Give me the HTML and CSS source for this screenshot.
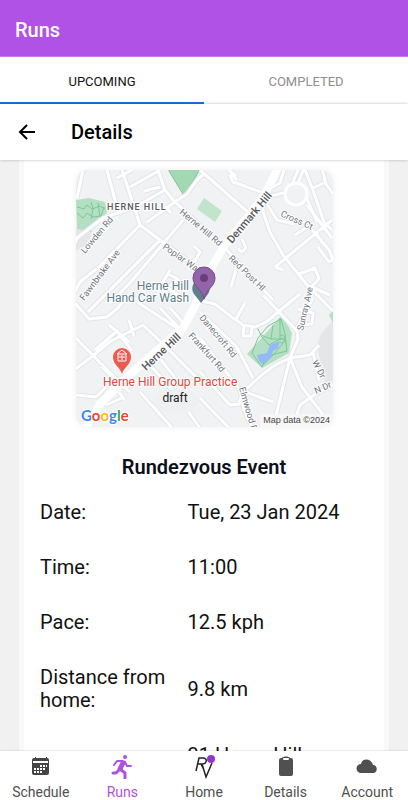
FILE: index.html
```html
<!DOCTYPE html>
<html lang="en">
  <head>
    <meta charset="UTF-8" />
    <meta name="viewport" content="width=device-width, initial-scale=1" />
    <title>Runs</title>
    <link rel="stylesheet" href="styles.css" />
  </head>
  <body>
    <header class="app-header">
      <h1>Runs</h1>
    </header>
    <div class="tabs" role="tablist">
      <button class="tab active" role="tab" aria-selected="true">UPCOMING</button>
      <button class="tab" role="tab" aria-selected="false">COMPLETED</button>
    </div>
    <div class="sub-header">
      <button class="back" aria-label="Back">
        <svg viewBox="0 0 24 24" width="24" height="24">
          <path d="M20 12H5M12 5l-7 7 7 7" fill="none" stroke="#000" stroke-width="2" />
        </svg>
      </button>
      <h2>Details</h2>
    </div>

    <main class="content">
      <div class="card">
        <svg class="map" viewBox="0 0 257 257" role="img" aria-label="Map of Herne Hill">
          <rect width="257" height="257" fill="#f1f2f4" />
          <!-- built-up areas -->
          <path d="M0 58h16l-2 14-14 9zM257 150l-12 14-4 11 8 40 8-5z" fill="#e4e6e8" />
          <!-- parks -->
          <g fill="#b4dfc2">
            <path d="M0 30l13-2 16 4 2 10-4 6-8 4-4 10-14-3z" />
            <path d="M92 0h32l-16 25z" fill="#a3d9b2" />
            <path d="M128 28l18 13-7 11-18-13z" fill="#c0e5ca" />
            <path d="M206 145l10 18-3 20-27 15-15-14z" />
            <path d="M257 141l-4 4 4 8z" />
          </g>
          <g class="park-path">
            <path d="M1 37l7 2 3-4 5 4 8-3 5 3M1 43l6 5 4-5 6 4 8-1 3-9M15 32l2 7-2 10M22 33l2 14" />
            <path d="M93 1l15 25 15-25" />
            <path d="M205 149l4 15 2 17-20 5-5 11-10-14 6-15 10-12zM181 157l4 8 10 4h15M197 155l-2 14M204 148v22M185 166l8 9 13-7 4 5M208 172l-10 12-12 12M204 166a3 4 0 1 1 0 6" />
          </g>
          <path d="M181 185l10-2 3-8 10-4-2 7-5 3-2 7-9 6-3-3z" fill="#93b9fa" />

          <!-- side streets, a grey casing under a white line -->
          <g class="road">
            <path id="streets" d="M7 0L1 28M31 0l8 30 4 14M46 0l18 55M54 17L84 0M41 8L56 0M82 0l7 20-30 17-32 11L1 68l-3 8M89 20l10 12 25 23 25 23 48 52M99 32l12-8 10-14 8-7M71 52l28-20M64 55L24 96 4 112l-6 12M64 55l20 15 38 28M84 70L24 130l-12 12M107 50L54 113l-20 20M118 76l6 6-5 9-7 1M92 104l10 5-8 7M94 100l-8 14 20 14M68 21L84 17M89 36l6 7
            M124 0l50 44M154 5l3 7 28 10M160 6l-7-6 8 10M187 28l0 14 7 20 13 23 24 30 23 10M199 97l57-47M187 28l24-6M231 35l25 33M216 14l7-16M222 13l6-15M191 20l13-7 4-13M191 34l10 16 17 4M231 29l10 23M229 0l8 20 11 32 8 8M246-2l4 16 7 10M237 18l13-6M219 65l14-9 22 26M242 77l11 15 4-2-4-10-9-10M166 69l4 9-4 4-4-3M161 96l-6 21M207 100l-8-3M223 104l16-6 4 11-9 9M231 115l26 26
            M-2 132l15 17 18-2 11-9 11-14M0 168l46 47 8 7M-2 200l16-12 21-17 32-16 20 19 42 42M19 180l22-19 15 20M53 150l5 16M61 132l40 26M33 155l20 17M26 197l15 14 12-2M0 225l20 2 10-10M30 235l16-7M43 222l6 8M74 195l28 32 24 34M64 222l34 38M81 185l24 30M84 138l20 21M94 138l16 18
            M121 130l18 4 18 14 10 7 12 2 11-5 34-28M169 133l-9 16M168 156l-1 10h8l1-9M124 142l36 34 17 32M124 168l40 52 33 12M164 220l4 20 9 20M124 202l30 33 9-1 4-12 20-18 14-10 13-6 20-3 9-10M187 125l34 36 1 8-8 19M214 188l-17 70M214 188l12 29 32 42M124 228l33 34M224 155l12-1 1-11-15-4M237 182l6 28M216 260l8-25 17-12 18-9M221 158l16-30" />
          </g>
          <g class="road-top">
            <use href="#streets" />
            <circle cx="220" cy="24" r="11" />
          </g>
          <path class="main-road" d="M203-4l-16 32-40 50-16 27-10 27-14 26-46 40-37 36-16 26" />

          <g class="street-name">
            <text transform="translate(9 84) rotate(-50)">Lowden Rd</text>
            <text transform="translate(8 131) rotate(-53)">Fawnbrake Ave</text>
            <text transform="translate(103 43) rotate(40)">Herne Hill Rd</text>
            <text transform="translate(86 78) rotate(35)">Poplar Walk</text>
            <text transform="translate(204 46) rotate(24)">Cross Ct</text>
            <text transform="translate(152 89) rotate(44)">Red Post Hl</text>
            <text transform="translate(227 161) rotate(-77)">Sunray Ave</text>
            <text transform="translate(123 148) rotate(50)">Danecroft Rd</text>
            <text transform="translate(112 166) rotate(48)">Frankfurt Rd</text>
            <text transform="translate(163 218) rotate(74)">Elmwood R</text>
            <text transform="translate(236 192) rotate(63)">W Dr</text>
            <text transform="translate(240 224) rotate(-24)">N Dr</text>
          </g>
          <g class="main-name">
            <text transform="translate(156 74) rotate(-50)">Denmark Hill</text>
            <text transform="translate(70 201) rotate(-43)">Herne Hill</text>
          </g>
          <text class="district" x="31" y="40">HERNE HILL</text>

          <path d="M125 133l-7-9c-4-6-1-14 7-14s11 8 7 14z" fill="#607d8b" />
          <text class="shop" x="113" y="120">Herne Hill</text>
          <text class="shop" x="113" y="132">Hand Car Wash</text>
          <path d="M128 129c-1-9-11-12-11-21a11 11 0 0 1 22 0c0 9-10 12-11 21z" fill="#9364a9" stroke="#754a8c" />
          <circle cx="128" cy="108" r="4" fill="#673f7d" />

          <path d="M46 204c-1-6-9-9-9-17a9 9 0 0 1 18 0c0 8-8 11-9 17z" fill="#eb5b50" />
          <path d="M42 184h8v7h-8zM41 184l5-4 5 4M46 185v5M43 187h6" fill="none" stroke="#fff" />
          <rect x="78" y="220" width="44" height="22" rx="11" fill="#eff0f0" />
          <text class="clinic" x="27" y="216">Herne Hill Group Practice</text>
          <text class="draft" x="99" y="232">draft</text>

          <text class="logo" x="5" y="251"><tspan fill="#4285f4">G</tspan><tspan fill="#ea4335">o</tspan><tspan fill="#fbbc05">o</tspan><tspan fill="#4285f4">g</tspan><tspan fill="#34a853">l</tspan><tspan fill="#ea4335">e</tspan></text>
          <rect x="184" y="244" width="73" height="13" fill="#f7f7f8" />
          <text class="credit" x="254" y="253">Map data ©2024</text>
        </svg>

        <h3>Rundezvous Event</h3>
        <table class="details">
          <tbody>
            <tr>
              <th scope="row">Date:</th>
              <td>Tue, 23 Jan 2024</td>
            </tr>
            <tr>
              <th scope="row">Time:</th>
              <td>11:00</td>
            </tr>
            <tr>
              <th scope="row">Pace:</th>
              <td>12.5 kph</td>
            </tr>
            <tr>
              <th scope="row">Distance from home:</th>
              <td>9.8 km</td>
            </tr>
            <tr>
              <td></td>
              <td>31 Herne Hill</td>
            </tr>
          </tbody>
        </table>
      </div>
    </main>

    <nav class="bottom-nav">
      <a href="#schedule">
        <svg viewBox="0 0 24 24" width="24" height="24">
          <path d="M6 2h1v1h10V2h1v1a2 2 0 0 1 2 2v13a2 2 0 0 1-2 2H5a2 2 0 0 1-2-2V5a2 2 0 0 1 2-2h1z" fill="#444" />
          <path d="M4 6h15v2H4z" fill="#fff" />
          <path d="M11 11h2M14 11h2M8 14h2M11 14h2M14 14h2M5 14h2M5 17h2M8 17h2M11 17h2M17 11h1" stroke="#fff" stroke-width="2" />
        </svg>
        Schedule
      </a>
      <a href="#runs" class="current">
        <svg viewBox="0 0 24 24" width="24" height="24" fill="none" stroke="#af52de" stroke-linecap="round" stroke-linejoin="round">
          <circle cx="15" cy="2" r="2" fill="#af52de" stroke="none" />
          <path d="M4 10l3-4 5 0 3 1 2 4h4" stroke-width="2" />
          <path d="M13 8l-3 6" stroke-width="5" />
          <path d="M10 14l5 4v5M8 16l-2 2H3" stroke-width="3" />
        </svg>
        Runs
      </a>
      <a href="#home">
        <svg viewBox="0 0 24 24" width="24" height="24">
          <g fill="none" stroke="#222" stroke-width="1.5">
            <path d="M4 16L7 3h4c5 0 4 6-1 6H6M9 9l3 6M10 9l4 13 6-14" />
          </g>
          <circle cx="19" cy="4" r="4" fill="#9038c8" />
        </svg>
        Home
      </a>
      <a href="#details">
        <svg viewBox="0 0 24 24" width="24" height="24">
          <path d="M7 3h1c1-2 7-2 8 0h1a2 2 0 0 1 2 2v14a2 2 0 0 1-2 2H7a2 2 0 0 1-2-2V5a2 2 0 0 1 2-2z" fill="#505050" />
          <rect x="9" y="3" width="6" height="2" rx="1" fill="#fff" />
        </svg>
        Details
      </a>
      <a href="#account">
        <svg viewBox="0 0 24 24" width="24" height="24">
          <path d="M6 18a4 4 0 0 1 0-9c1-6 10-6 12 1 5 0 5 8 0 8z" fill="#505050" />
        </svg>
        Account
      </a>
    </nav>
  </body>
</html>
```

FILE: styles.css
```css
* {
  box-sizing: border-box;
}
body {
  margin: 0;
  height: 100vh;
  display: flex;
  flex-direction: column;
  font-family: Roboto, sans-serif;
  background: #f1f1f1;
  color: #111;
}
h1,
h2,
h3 {
  margin: 0;
  font-size: 20px;
  font-weight: 500;
}
button {
  font-family: inherit;
  border: none;
  background: none;
  padding: 0;
  cursor: pointer;
}
.app-header {
  flex: none;
  height: 57px;
  padding: 4px 15px 0;
  display: flex;
  align-items: center;
  background: #af52e5;
  border-bottom: 1px solid #c77df0;
  color: #fff;
}
.tabs {
  flex: none;
  display: flex;
  height: 47px;
  background: #fff;
}
.tab {
  flex: 1;
  padding-top: 3px;
  font-size: 13px;
  color: #8e8e8e;
  border-bottom: 2px solid transparent;
}
.tab.active {
  color: #111;
  border-bottom-color: #1673ee;
}
.sub-header {
  flex: none;
  height: 56px;
  padding: 0 15px;
  display: flex;
  align-items: center;
  gap: 32px;
  background: #fff;
  box-shadow: 0 0 3px #0004;
  z-index: 1;
}
.sub-header h2 {
  color: #000;
}
.back {
  width: 24px;
  height: 24px;
}
.back svg {
  display: block;
}
.content {
  flex: 1;
  min-height: 0;
  overflow-y: auto;
  scrollbar-width: none;
  padding: 0 19px;
}
.card {
  padding: 10px 0 16px;
  background: #fff;
  border: solid #f9f9f9;
  border-width: 0 5px;
  text-align: center;
}
.map {
  display: block;
  width: 100%;
  max-width: 257px;
  margin: 0 auto 28px;
  border-radius: 12px;
  box-shadow: 0 0 6px #0001;
}
.card h3 {
  line-height: 24px;
  margin-bottom: 6px;
  font-weight: 600;
  color: #0b0f1a;
}
.details {
  width: 100%;
  border-collapse: collapse;
  font-size: 20px;
  line-height: 23px;
  text-align: left;
}
.details th,
.details td {
  padding: 16px 0 16px 16px;
  font-weight: 400;
}
.details th {
  width: 41%;
}
.bottom-nav {
  flex: none;
  display: flex;
  height: 49px;
  background: #fff;
  box-shadow: 0 0 2px #0003;
  z-index: 1;
}
.bottom-nav a {
  flex: 1;
  display: flex;
  flex-direction: column;
  align-items: center;
  gap: 5px;
  padding-top: 4px;
  font-size: 14px;
  line-height: 16px;
  color: #505050;
  text-decoration: none;
}
.bottom-nav a.current {
  color: #af52de;
}
.bottom-nav svg {
  flex: none;
}

/* map drawing */
.park-path {
  fill: none;
  stroke: #79c994;
  stroke-width: 1;
}
.road,
.road-top {
  fill: none;
  stroke: #e3e5e8;
  stroke-width: 5;
  stroke-linejoin: round;
}
.road-top {
  stroke: #fff;
  stroke-width: 3;
}
.main-road {
  fill: none;
  stroke: #fff;
  stroke-width: 8;
  stroke-linejoin: round;
}
.map text {
  stroke: #fff;
  stroke-width: 2px;
  paint-order: stroke;
}
.street-name {
  font-size: 9px;
  fill: #70757a;
}
.main-name {
  font-size: 11px;
  font-weight: 500;
  fill: #55595e;
}
.district {
  font-size: 9px;
  font-weight: 500;
  letter-spacing: 1px;
  fill: #55595e;
}
.shop {
  font-size: 12px;
  text-anchor: end;
  fill: #607d8b;
}
.clinic {
  font-size: 12px;
  fill: #e2453c;
}
.map .draft {
  font-size: 12px;
  text-anchor: middle;
  fill: #222;
  stroke: none;
}
.map .logo {
  font-family: Lato, sans-serif;
  font-size: 15px;
  font-weight: 700;
}
.map .credit {
  font-family: "Liberation Sans", sans-serif;
  font-size: 9px;
  text-anchor: end;
  fill: #444;
  stroke: none;
}
```
